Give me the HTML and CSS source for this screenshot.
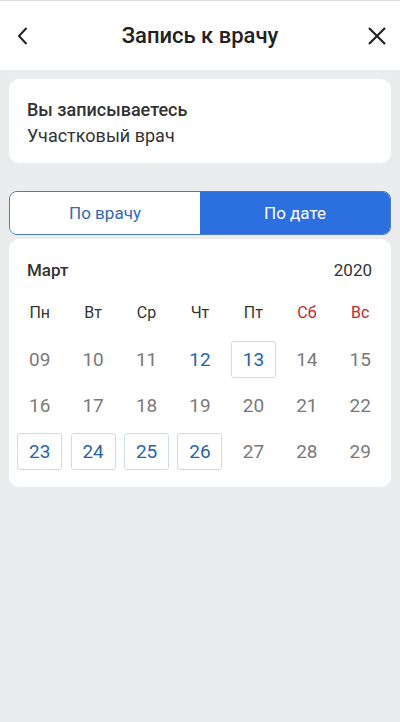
FILE: index.html
```html
<!DOCTYPE html>
<html lang="ru">
<head>
<meta charset="utf-8">
<link rel="stylesheet" href="styles.css">
</head>
<body>
<header class="topbar">
  <button class="icon-btn" aria-label="Назад">
    <svg width="14" height="20" viewBox="0 0 14 20"><path d="M10.5 2 L3 10 L10.5 18" fill="none" stroke="#222" stroke-width="2"/></svg>
  </button>
  <h1 class="title">Запись к врачу</h1>
  <button class="icon-btn" aria-label="Закрыть">
    <svg width="20" height="20" viewBox="0 0 20 20"><path d="M2 2 L18 18 M18 2 L2 18" fill="none" stroke="#222" stroke-width="2.2"/></svg>
  </button>
</header>
<main class="content">
  <section class="card info">
    <div class="info-title">Вы записываетесь</div>
    <div class="info-sub">Участковый врач</div>
  </section>
  <div class="toggle">
    <div class="toggle-item">По врачу</div>
    <div class="toggle-item active">По дате</div>
  </div>
  <section class="card calendar">
    <div class="cal-head"><span class="month">Март</span><span class="year">2020</span></div>
    <div class="grid weekdays">
      <span>Пн</span><span>Вт</span><span>Ср</span><span>Чт</span><span>Пт</span><span class="wkend">Сб</span><span class="wkend">Вс</span>
    </div>
    <div class="grid days">
      <span>09</span><span>10</span><span>11</span><span class="avail">12</span><span class="avail boxed">13</span><span>14</span><span>15</span>
      <span>16</span><span>17</span><span>18</span><span>19</span><span>20</span><span>21</span><span>22</span>
      <span class="avail boxed">23</span><span class="avail boxed">24</span><span class="avail boxed">25</span><span class="avail boxed">26</span><span>27</span><span>28</span><span>29</span>
    </div>
  </section>
</main>
</body>
</html>
```
FILE: styles.css
```css
* { box-sizing: border-box; }
html, body { margin: 0; padding: 0; }
body {
  width: 400px;
  min-height: 722px;
  background: #ebecee;
  font-family: Roboto, "Noto Sans", sans-serif;
  color: #222;
}
.topbar {
  height: 70px;
  background: #fff;
  border-top: 1px solid #dcdcdc;
  display: flex;
  align-items: center;
  justify-content: space-between;
  padding: 0 11px 0 11px;
}
.icon-btn {
  width: 24px;
  height: 24px;
  border: 0;
  background: none;
  padding: 0;
  display: flex;
  align-items: center;
  justify-content: center;
}
.title {
  margin: 0;
  font-size: 22px;
  font-weight: 500;
  color: #222;
}
.content {
  padding: 9px 9px;
  display: flex;
  flex-direction: column;
}
.card {
  background: #fff;
  border-radius: 10px;
}
.info {
  height: 84px;
  padding: 19px 18px 0;
}
.info-title {
  font-size: 18px;
  font-weight: 500;
  color: #333;
  line-height: 23px;
}
.info-sub {
  font-size: 18px;
  color: #333;
  line-height: 23px;
  margin-top: 3px;
}
.toggle {
  margin-top: 28px;
  height: 44px;
  display: flex;
  border: 1.5px solid #4a7cbf;
  border-radius: 8px;
  overflow: hidden;
}
.toggle-item {
  flex: 1;
  display: flex;
  align-items: center;
  justify-content: center;
  font-size: 17px;
  color: #2e6ab6;
  background: #fff;
}
.toggle-item.active {
  background: #2b70de;
  color: #fff;
}
.calendar {
  margin-top: 4px;
  padding: 19px 4px 17px;
}
.cal-head {
  display: flex;
  justify-content: space-between;
  padding: 0 15px 0 14px;
  line-height: 24px;
  font-size: 17px;
  color: #333;
}
.month { font-weight: 500; }
.grid {
  display: grid;
  grid-template-columns: repeat(7, 1fr);
  justify-items: center;
}
.weekdays {
  margin-top: 19px;
  line-height: 24px;
  font-size: 16px;
  color: #333;
}
.weekdays .wkend { color: #c0282d; }
.days {
  margin-top: 16px;
  grid-auto-rows: 37px;
  row-gap: 9px;
  font-size: 19px;
  color: #7a7a7a;
}
.days span {
  width: 45px;
  display: flex;
  align-items: center;
  justify-content: center;
}
.days .avail { color: #2a62ab; }
.days .boxed {
  border: 1px solid #cfdbe8;
  border-radius: 3px;
}
```
